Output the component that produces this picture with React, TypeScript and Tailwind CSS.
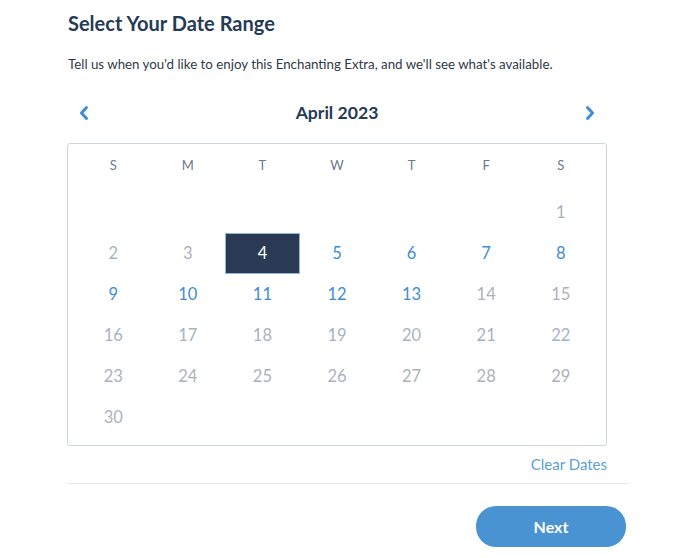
const weeks: (number | null)[][] = [
  [null, null, null, null, null, null, 1],
  [2, 3, 4, 5, 6, 7, 8],
  [9, 10, 11, 12, 13, 14, 15],
  [16, 17, 18, 19, 20, 21, 22],
  [23, 24, 25, 26, 27, 28, 29],
  [30, null, null, null, null, null, null],
]

const available = [5, 6, 7, 8, 9, 10, 11, 12, 13]
const selected = 4
const dayNames = ['S', 'M', 'T', 'W', 'T', 'F', 'S']

function Chevron({ dir }: { dir: 'left' | 'right' }) {
  return (
    <svg width="12" height="16" viewBox="0 0 12 16" fill="none">
      <path
        d={dir === 'left' ? 'M8.5 2.5 L3.5 8 L8.5 13.5' : 'M3.5 2.5 L8.5 8 L3.5 13.5'}
        stroke="#3f8dd6"
        strokeWidth="3"
        strokeLinecap="round"
        strokeLinejoin="round"
      />
    </svg>
  )
}

export default function App() {
  return (
    <div className="w-[700px] h-[558px] bg-white font-['Lato','Noto_Sans',sans-serif] overflow-hidden">
      <div className="ml-[67px] w-[562px] pt-[11px]">
        <h1 className="pl-px text-[20px] leading-[24px] font-bold text-[#253a57]">Select Your Date Range</h1>
        <p className="mt-[20px] pl-px text-[13.3px] leading-[18px] text-[#2f3a48]">
          Tell us when you'd like to enjoy this Enchanting Extra, and we'll see what's available.
        </p>

        <div className="w-[540px] mt-[23px] h-[34px] flex items-center justify-between px-[11px]">
          <button className="flex items-center"><Chevron dir="left" /></button>
          <span className="text-[17.6px] font-bold text-[#253a57]">April 2023</span>
          <button className="flex items-center"><Chevron dir="right" /></button>
        </div>

        <div className="w-[540px] mt-[13px] border border-[#cdd6e0] rounded-[3px] px-2 pb-[7px]">
          <div className="grid grid-cols-7 h-[44px] items-center">
            {dayNames.map((d, i) => (
              <div key={i} className="text-center text-[13px] text-[#6b7a8c]">{d}</div>
            ))}
          </div>
          <div className="mt-[4px]">
            {weeks.map((week, wi) => (
              <div key={wi} className="grid grid-cols-7 h-[41px]">
                {week.map((day, di) => {
                  if (day === null) return <div key={di} />
                  if (day === selected)
                    return (
                      <div
                        key={di}
                        className="flex items-center justify-center bg-[#2a3a55] border border-[#8fb8e0] text-white text-[16.5px]"
                      >
                        {day}
                      </div>
                    )
                  const isAvail = available.includes(day)
                  return (
                    <div
                      key={di}
                      className={
                        isAvail
                          ? 'flex items-center justify-center text-[16.5px] text-[#3f8dd6]'
                          : 'flex items-center justify-center text-[16.5px] text-[#a9b3be]'
                      }
                    >
                      {day}
                    </div>
                  )
                })}
              </div>
            ))}
          </div>
        </div>

        <div className="w-[540px] flex justify-end mt-[8px]">
          <button className="text-[15px] leading-[20px] text-[#5b9fd9]">Clear Dates</button>
        </div>

        <div className="mt-[9px] h-px bg-[#e3e6ea]" />

        <div className="flex justify-end mt-[22px] pr-[3px]">
          <button className="w-[150px] h-[41px] rounded-[20px] bg-[#4a93d2] text-white text-[16px] font-bold">
            Next
          </button>
        </div>
      </div>
    </div>
  )
}
